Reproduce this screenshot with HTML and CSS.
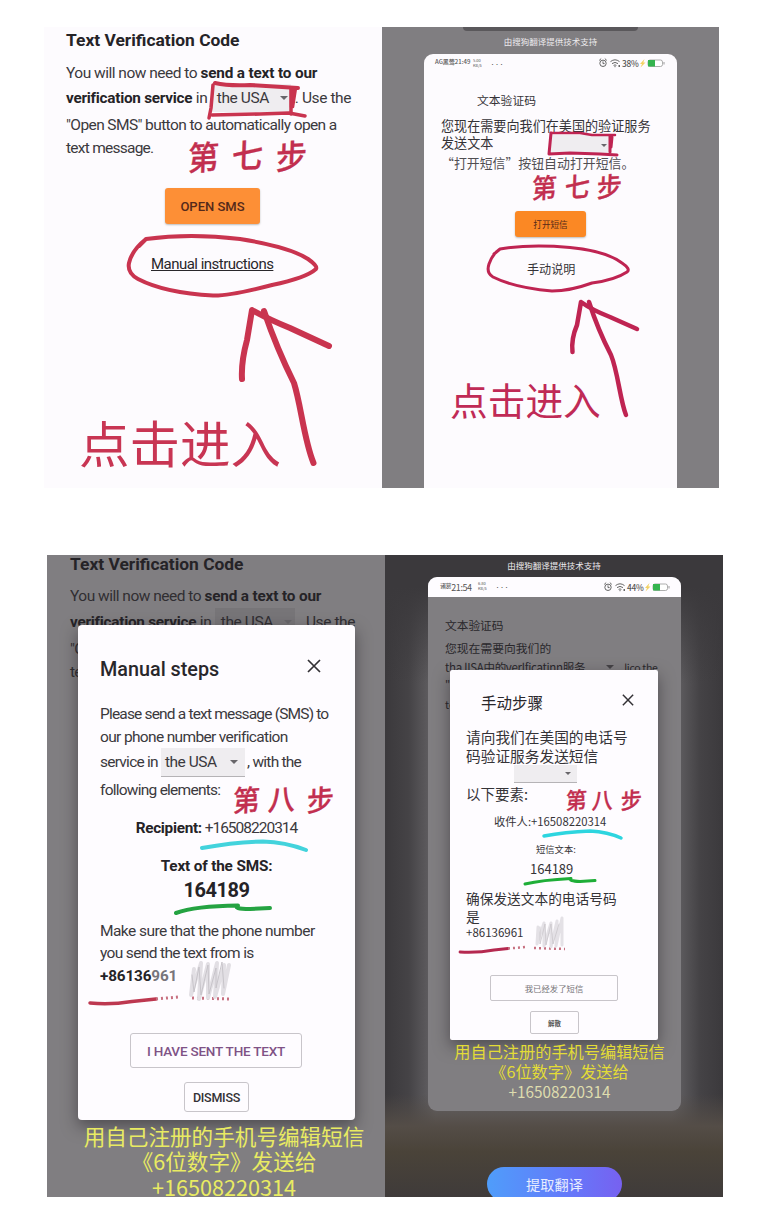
FILE: index.html
```html
<!DOCTYPE html>
<html lang="zh-CN">
<head>
<meta charset="utf-8">
<title>Text Verification Code</title>
<link rel="stylesheet" href="styles.css">
</head>
<body>
<svg class="defs" width="0" height="0">
  <symbol id="status" viewBox="0 0 70 12">
    <g fill="none" stroke="#666" stroke-width="1">
      <circle cx="5" cy="6.300" r="3.200"/><path d="M5 4.400v2.200h1.600M1.200 3.400l2-1.800M8.800 3.400L6.800 1.600"/>
      <path d="M12.500 4.600q4.500-3.600 9 0M14 6.600q3-2.400 6 0M15.600 8.400q1.400-1 2.800 0"/>
    </g>
    <path d="M16 9.300h2l-1 1.200z" fill="#666"/>
    <path d="M20.500 8h1.500v2h-1.500z" fill="#666"/>
    <path d="M46.500 2L42 7h2l-1.500 3.500L47.500 5.500h-2.200z" fill="#f3d264"/>
    <rect x="50" y="3" width="14.500" height="6.500" rx="2" fill="#fff" stroke="#999" stroke-width=".8"/>
    <path d="M50 3h7v6.500h-7z" fill="#35b44f"/>
    <path d="M66 5v2.500" stroke="#999" stroke-width="1"/>
  </symbol>
</svg>
<main class="page">
  <section class="shot shot-a">
    <div class="panel en">
      <h2 class="en-title">Text Verification Code</h2>
      <p class="ln en-1">You will now need to <b>send a text to our</b></p>
      <p class="ln en-2"><b>verification service</b> in <span class="pick">the USA<i class="caret"></i></span>. Use the</p>
      <p class="ln en-3">"Open SMS" button to automatically open a</p>
      <p class="ln en-4">text message.</p>
      <button class="open">OPEN SMS</button>
      <a class="manual">Manual instructions</a>
      <svg class="ink" viewBox="44 27 338 461">
        <g stroke="#c9344f">
          <path stroke-width="4" d="M215 83Q228 86 250 85L298 88"/>
          <path stroke-width="3.500" d="M213 85L211 108L209 118"/>
          <path stroke-width="3.500" d="M212 115L260 114L289 113L305 116"/>
          <path stroke-width="3.500" d="M291 88L291 114"/>
          <path stroke-width="2.500" fill="#c9344f" d="M291 90L296 88L293 107L291 107z"/>
          <path stroke-width="4" d="M139 246L146 239Q190 233 240 239Q290 247 308 259Q318 266 316 269Q306 278 272 285Q230 296 213 295.500Q165 293 138 279Q127 273 129 263Q132 250 146 239"/>
          <path stroke-width="6" d="M242 379Q241 362 247 340L252 310Q268 319 290 328L329 346"/>
          <path stroke-width="6" d="M264 311Q277 349 294 383C301 405 304 440 313.500 463"/>
        </g>
        <g class="brush brush-a"><text x="188" y="169">第</text><text x="232" y="167">七</text><text x="276" y="168">步</text></g>
        <text class="enter" x="79" y="463" font-size="50.500">点击进入</text>
      </svg>
    </div>
    <div class="panel cn">
      <div class="notch"></div>
      <p class="caption">由搜狗翻译提供技术支持</p>
      <div class="phone">
        <div class="bar"><span class="clock">AG黑莺21:49</span><span class="rate">5.00<br>KB/s</span><span class="dots">•••</span><span class="stat"><svg><use href="#status"/></svg><span class="pct">38%</span></span></div>
        <p class="zh zt">文本验证码</p>
        <p class="zh z1">您现在需要向我们在美国的验证服务</p>
        <p class="zh z2">发送文本<span class="zpick"><i class="caret"></i></span></p>
        <p class="zh z3">“打开短信”按钮自动打开短信。</p>
        <button class="open zopen">打开短信</button>
        <p class="zh z4">手动说明</p>
      </div>
      <svg class="ink" viewBox="382 27 337 461">
        <g stroke="#bf2452">
          <path stroke-width="2.500" d="M551 133L580 133L592 135L615 135"/>
          <path stroke-width="3" d="M551 133L549 154L570 153L600 154L617 155"/>
          <path stroke-width="3" d="M610 136L610 152M612 137L611 147"/>
          <path stroke-width="3" d="M494 254L500 249Q530 244 570 247.500Q606 251 622 263Q631 269 627 272Q615 280 592 283Q570 291 552 291Q515 288 493 277Q486 273 489 264Q493 253 500 249"/>
          <path stroke-width="4.500" d="M572.500 352Q571 339 577 325L581 302Q592 310 610 317L637 329"/>
          <path stroke-width="4.500" d="M589 302Q598 330 611 355C618 372 620 400 626 415"/>
        </g>
        <g class="brush brush-b"><text x="532" y="197">第</text><text x="565" y="196">七</text><text x="597" y="196">步</text></g>
        <text class="enter enter-b" x="450" y="415" font-size="37.700">点击进入</text>
      </svg>
    </div>
  </section>

  <section class="shot shot-b">
    <div class="panel en dim">
      <h2 class="en-title">Text Verification Code</h2>
      <p class="ln en-1">You will now need to <b>send a text to our</b></p>
      <p class="ln en-2"><b>verification service</b> in <span class="pick">the USA<i class="caret"></i></span>. Use the</p>
      <p class="ln en-3">"O</p>
      <p class="ln en-4">te</p>
      <div class="modal">
        <div class="head"><h3>Manual steps</h3><svg class="close" viewBox="0 0 14 14"><path d="M1 1l12 12M13 1L1 13"/></svg></div>
        <p class="ln m1">Please send a text message (SMS) to</p>
        <p class="ln m2">our phone number verification</p>
        <p class="ln m3">service in <span class="pick mpick">the USA<i class="caret"></i></span>, with the</p>
        <p class="ln m4">following elements:</p>
        <p class="ln m5"><b>Recipient:</b> +16508220314</p>
        <p class="ln m6"><b>Text of the SMS:</b></p>
        <p class="ln m7"><b>164189</b></p>
        <p class="ln m8">Make sure that the phone number</p>
        <p class="ln m9">you send the text from is</p>
        <p class="ln m10"><b>+86136</b><b class="fade">961</b></p>
        <button class="sent">I HAVE SENT THE TEXT</button>
        <button class="dismiss">DISMISS</button>
      </div>
      <div class="note"><p>用自己注册的手机号编辑短信</p><p>《6位数字》发送给</p><p>+16508220314</p></div>
      <svg class="ink" viewBox="47 555 338 642">
        <path stroke="#43d3dc" stroke-width="4" d="M202 848Q235 842 263 841.500Q285 842 306 850"/>
        <path stroke="#25a342" stroke-width="4" d="M176 913Q195 906 238 905.500Q232 909 250 909L270 908"/>
        <path stroke="#bd3850" stroke-width="3.500" d="M90 1003Q110 1005 132 1001.500L156 999"/>
        <path stroke="#c77080" stroke-width="3" stroke-dasharray="2 3" stroke-linecap="butt" d="M156 999L178 997M192 998L231 999"/>
        <path stroke="#e2dfe4" stroke-width="4" d="M194 969l-3 26 10-32-2 36 9-35 0 34 9-35-2 34 9-32-1 29 6-29"/>
        <path stroke="#c4c1c6" stroke-width=".9" d="M192 975l2 17 5-25 2 28 7-30 1 29 7-26 0 20 6-26 2 26"/>
        <g class="brush brush-c"><text x="233" y="810">第</text><text x="268" y="809">八</text><text x="307" y="810">步</text></g>
      </svg>
    </div>
    <div class="panel cn night">
      <p class="caption">由搜狗翻译提供技术支持</p>
      <div class="phone">
        <div class="bar"><span class="clock clock-b"><small>诸葛</small>21:54</span><span class="rate">6.80<br>KB/s</span><span class="dots">•••</span><span class="stat"><svg><use href="#status"/></svg><span class="pct">44%</span></span></div>
        <p class="zh y0">文本验证码</p>
        <p class="zh y1">您现在需要向我们的</p>
        <p class="zh y2"><span>tha lISA中的verlficatinn服务</span><i class="caret"></i><span class="use">lico the</span></p>
        <p class="zh y3">"o</p>
        <p class="zh y4">te</p>
        <div class="modal zmodal">
          <div class="head"><h3>手动步骤</h3><svg class="close" viewBox="0 0 14 14"><path d="M1 1l12 12M13 1L1 13"/></svg></div>
          <p class="zh k1">请向我们在美国的电话号</p>
          <p class="zh k2">码验证服务发送短信</p>
          <div class="kpick"><i class="caret"></i></div>
          <p class="zh k3">以下要素:</p>
          <p class="zh k4">收件人:+16508220314</p>
          <p class="zh k5">短信文本:</p>
          <p class="zh k6">164189</p>
          <p class="zh k7">确保发送文本的电话号码</p>
          <p class="zh k8">是</p>
          <p class="zh k9">+86136961</p>
          <button class="ksent">我已经发了短信</button>
          <button class="kdis">解散</button>
        </div>
        <div class="note znote"><p>用自己注册的手机号编辑短信</p><p>《6位数字》发送给</p><p>+16508220314</p></div>
      </div>
      <button class="pill">提取翻译</button>
      <svg class="ink" viewBox="385 555 338 642">
        <path stroke="#2dd5df" stroke-width="3.500" d="M544 836Q565 832 590 831Q608 832 621 838"/>
        <path stroke="#1fae38" stroke-width="3" d="M525 884Q542 880 571 878.500Q568 881 580 881.500L595 880.500"/>
        <path stroke="#b52950" stroke-width="2.800" d="M460 952Q478 953 494 950L508 948.500"/>
        <path stroke="#c77080" stroke-width="2.500" stroke-dasharray="2 3" stroke-linecap="butt" d="M508 948.500L526 947M534 948L565 949"/>
        <path stroke="#e4e1e6" stroke-width="3" d="M538 927l-1 17 7-21 0 23 7-23 0 24 6-26-1 25 6-28 0 27"/>
        <path stroke="#cac7cc" stroke-width=".8" d="M540 927l0 17 5-20 1 21 5-21 2 20 6-20"/>
        <g class="brush brush-d"><text x="566" y="808">第</text><text x="592" y="808">八</text><text x="621" y="808">步</text></g>
      </svg>
    </div>
  </section>
</main>
</body>
</html>
```
FILE: styles.css
```css
* { box-sizing: border-box; margin: 0; padding: 0; }
body { width: 783px; height: 1211px; background: #fff; overflow: hidden; font-family: Roboto, "Noto Sans CJK SC", sans-serif; color: #3b393d; }
button { font: inherit; border: 0; display: block; }
.defs { position: absolute; }
.page { display: flex; flex-direction: column; gap: 67px; padding: 27px 0 0 44px; }
.shot { display: grid; overflow: hidden; }
.shot-a { grid-template-columns: 338px 337px; width: 675px; height: 461px; }
.shot-b { grid-template-columns: 338px 338px; width: 676px; height: 642px; margin-left: 3px; }
.panel { position: relative; overflow: hidden; }
.ink { position: absolute; inset: 0; width: 100%; height: 100%; fill: none; stroke-linecap: round; stroke-linejoin: round; pointer-events: none; }

/* English page */
.en { background: #fdfbfe; padding: 3px 0 0 22px; }
.en-title { font-size: 17.400px; line-height: 20px; font-weight: 700; color: #252327; white-space: nowrap; }
.ln { height: 20px; line-height: 20px; font-size: 15.500px; letter-spacing: -.6px; white-space: nowrap; }
.ln b { font-size: 15.300px; letter-spacing: -.15px; color: #252327; }
.en-1 { margin-top: 13px; letter-spacing: -.5px; }
.en-2 { margin-top: 5px; display: flex; align-items: center; white-space: pre; letter-spacing: -.4px; }
.en-2 b { letter-spacing: -.25px; }
.en-3 { margin-top: 7px; }
.en-4 { margin-top: 3px; letter-spacing: -.75px; }
.pick { display: inline-flex; align-items: center; justify-content: space-between; flex: none; width: 80px; height: 28px; margin-right: 4px; padding: 0 3px 0 6px; background: #efedf0; }
.caret { display: inline-block; border: 4px solid transparent; border-top: 4px solid #68666a; border-bottom: 0; }
.open { width: 95px; height: 36px; margin: 30px 0 0 99px; background: #fd8f36; border-radius: 3px; font-size: 13px; font-weight: 500; color: #55291a; box-shadow: 0 1px 2px #bbb; }
.manual { display: block; width: max-content; margin: 30px 0 0 85px; height: 20px; line-height: 20px; font-size: 15px; letter-spacing: -.52px; color: #29272b; text-decoration: underline; }
.brush { fill: #c22f4f; stroke: #c22f4f; stroke-width: .3; font-family: "Noto Sans CJK SC", sans-serif; font-weight: 500; }
.brush text { transform-box: fill-box; transform-origin: center; transform: skewX(-5deg) rotate(-3deg) scaleY(1.08); }
.brush-a { font-size: 31px; }
.brush-b { font-size: 25px; }
.brush-c { font-size: 27px; }
.brush-d { font-size: 21px; }
.enter { fill: #c83553; font-family: "Noto Sans CJK SC", sans-serif; }
.enter-b { fill: #c02a56; }

/* Translated page */
.cn { background: #807e81; font-family: "Noto Sans CJK SC", sans-serif; }
.notch { width: 175px; height: 4px; margin: 0 auto; background: #5a585b; border-radius: 0 0 5px 5px; }
.caption { height: 14px; margin-top: 4px; line-height: 12px; font-size: 8.500px; color: #eceaed; text-align: center; }
.phone { width: 253px; margin: 5px 0 0 42px; height: 440px; background: #fdfbfe; border-radius: 9px 9px 0 0; padding-left: 17px; }
.bar { display: flex; height: 20px; margin-left: -6px; font-size: 6px; line-height: 15px; color: #555; }
.clock { width: 38px; white-space: nowrap; font-weight: 500; }
.rate { width: 17px; font-size: 4px; line-height: 5px; padding-top: 4px; }
.dots { width: 108px; line-height: 19px; font-size: 5px; letter-spacing: -.5px; }
.stat { position: relative; width: 70px; height: 20px; }
.stat svg { width: 70px; height: 12px; margin-top: 3px; display: block; }
.pct { position: absolute; left: 24px; top: 1px; font-size: 8.300px; line-height: 16px; letter-spacing: -.2px; font-weight: 500; }
.zh { height: 16px; line-height: 15px; font-size: 13.100px; white-space: nowrap; color: #353337; }
.zt { font-size: 11.800px; margin: 18px 0 0 36px; }
.z1 { margin-top: 10px; }
.z2 { margin-top: 1px; display: flex; }
.zpick { width: 58px; height: 20px; margin-left: 58px; background: #efedf0; display: flex; align-items: center; justify-content: flex-end; padding-right: 2px; }
.zpick .caret { border-width: 3px 3px 0; }
.z3 { margin-top: 4px; color: #504e52; font-size: 12.900px; }
.zopen { width: 71px; height: 26px; margin: 40px 0 0 74px; font-size: 8.600px; line-height: 24px; font-weight: 400; background: #fb8824; }
.z4 { font-size: 12.100px; margin: 24px 0 0 86px; }

/* Dimmed page with the dialog */
.dim { background: #807e81; padding: 0 0 0 23px; color: #302e32; }
.dim .en-title { line-height: 18px; height: 20px; }
.dim .pick { background: #777578; }
.dim .en-1 { margin-top: 11px; }
.dim .en-2 { margin-top: 6px; }
.modal { position: absolute; left: 31px; top: 70px; width: 277px; height: 495px; padding: 35px 22px 0; background: #fefcff; border-radius: 4px; box-shadow: 0 6px 16px rgba(30,28,32,.5); color: #3b393d; }
.head { display: flex; justify-content: space-between; height: 20px; }
.head h3 { font-size: 19.800px; line-height: 19px; font-weight: 500; color: #29272b; }
.close { width: 14px; height: 14px; margin: -1px 12px 0 0; fill: none; stroke: #333135; stroke-width: 1.700; }
.m1 { margin-top: 24px; letter-spacing: -.82px; }
.m2 { margin-top: 3px; letter-spacing: -.65px; }
.m3 { margin-top: 5px; display: flex; align-items: center; white-space: pre; letter-spacing: -.75px; }
.m4 { margin-top: 8px; letter-spacing: -.75px; }
.m5, .m6, .m7 { text-align: center; }
.m5 { margin-top: 18px; letter-spacing: -1px; }
.ln.m5 b { letter-spacing: -.3px; }
.m6 { margin-top: 18px; }
.m7 { margin-top: 4px; }
.ln.m7 b { font-size: 20px; letter-spacing: -.5px; }
.m8 { margin-top: 21px; letter-spacing: -.55px; }
.m9 { margin-top: 2px; letter-spacing: -.65px; }
.m10 { margin-top: 3px; }
.ln b.fade { color: #77757a; }
.modal .mpick { width: 84px; height: 29px; background: #efedf0; border-bottom: 1px solid #b5b3b6; margin: 0 2px 0 0; padding: 0 7px 0 4px; letter-spacing: -.5px; }
.sent, .dismiss { margin: 0 auto; background: none; border: 1px solid #c8c5ca; border-radius: 3px; font-weight: 500; white-space: nowrap; }
.sent { width: 172px; height: 35px; margin: 47px 0 0 30px; font-size: 13.500px; letter-spacing: -.2px; color: #7f5286; }
.dismiss { width: 65px; height: 30px; margin: 14px 0 0 84px; font-size: 12.500px; letter-spacing: -.25px; color: #333135; }
.note { position: absolute; left: 0; top: 568px; width: 354px; font-family: "Noto Sans CJK SC", sans-serif; font-size: 21.600px; line-height: 25.400px; text-align: center; color: #e9eb62; }

/* Night surroundings of the translated dialog */
.night { background: linear-gradient(90deg, #3b393c 0, #454346 7%, #666467 15%, #666467 85%, #454346 93%, #3b393c 100%); padding-top: 1px; }
.night::before { content: ""; position: absolute; inset: 0; background: linear-gradient(#3b393c 0, #3b393c 5%, transparent 20%, transparent 84%, #544d47 89%, #4a4339 93%, #3f3b3a 100%); }
.night > * { position: relative; }
.night > .ink { position: absolute; }
.night .caption { line-height: 11px; }
.night .phone { position: relative; width: 253px; height: 534px; margin: 3px 0 0 43px; background: #807e81; border-radius: 9px; overflow: hidden; }
.night .bar { height: 20px; margin-left: -17px; padding-left: 12px; background: #fefcff; }
.clock-b { font-size: 9px; line-height: 21px; letter-spacing: -.4px; font-weight: 400; }
.clock-b small { font-size: 6px; position: relative; top: -3px; }
.night .stat { top: 1px; }
.phone .y0 { font-size: 11.700px; margin-top: 20px; }
.phone .y0, .phone .y1, .phone .y2, .phone .y3, .phone .y4 { color: #29272b; }
.y1 { font-size: 11.800px; margin-top: 7px; }
.y2 { font-size: 11.500px; letter-spacing: -.3px; margin-top: 3px; display: flex; align-items: center; }
.y2 .caret { margin-left: 21px; border-top-color: #444246; }
.y2 .use { margin-left: 10px; font-size: 10.500px; }
.y3 { font-size: 11px; margin-top: 3px; }
.y4 { font-size: 11px; margin-top: 3px; }
.modal.zmodal { left: 22px; top: 93px; width: 208px; height: 370px; padding: 25px 16px 0; border-radius: 2px; }
.zmodal .head { height: 16px; }
.zmodal .head h3 { font-size: 15.500px; line-height: 15px; font-weight: 400; margin-left: 15px; }
.zmodal .close { width: 12px; height: 12px; margin: -1px 8px 0 0; }
.zh.k1 { font-size: 14.700px; margin-top: 18px; }
.zh.k2 { font-size: 14.700px; margin-top: 3px; }
.kpick { width: 63px; height: 18px; margin: 1px 0 0 48px; background: #efedf0; border-bottom: 1px solid #b5b3b6; display: flex; align-items: center; justify-content: flex-end; padding-right: 6px; }
.kpick .caret { border-width: 3px 3px 0; }
.zh.k3 { font-size: 14.500px; margin-top: 3px; }
.zh.k4 { font-size: 11.300px; margin: 12px 0 0 28px; }
.zh.k5 { font-size: 9.300px; margin: 12px 0 0 70px; }
.zh.k6 { font-size: 13px; margin: 3px 0 0 64px; }
.zh.k7 { font-size: 13.700px; margin-top: 14px; }
.zh.k8 { font-size: 13.700px; margin-top: 2px; }
.zh.k9 { font-size: 11.500px; margin-top: 0; }
.ksent, .kdis { background: none; border: 1px solid #c8c5ca; border-radius: 2px; }
.ksent { width: 128px; height: 26px; margin: 34px 0 0 24px; font-size: 8.400px; line-height: 22px; color: #777579; }
.kdis { width: 49px; height: 23px; margin: 10px 0 0 64px; font-size: 6.500px; font-weight: 700; color: #555; }
.znote { left: 5px; top: 464px; width: 253px; font-size: 16.200px; line-height: 20px; color: #e3dc36; }
.znote p:last-child { font-size: 15.300px; color: #dedcae; }
.pill { width: 135px; height: 34px; margin: 56px 0 0 102px; border-radius: 17px; background: linear-gradient(90deg, #4f9dfa, #6479fa 60%, #7761f0); color: #e8edff; font-size: 14.200px; line-height: 30px; }
```
